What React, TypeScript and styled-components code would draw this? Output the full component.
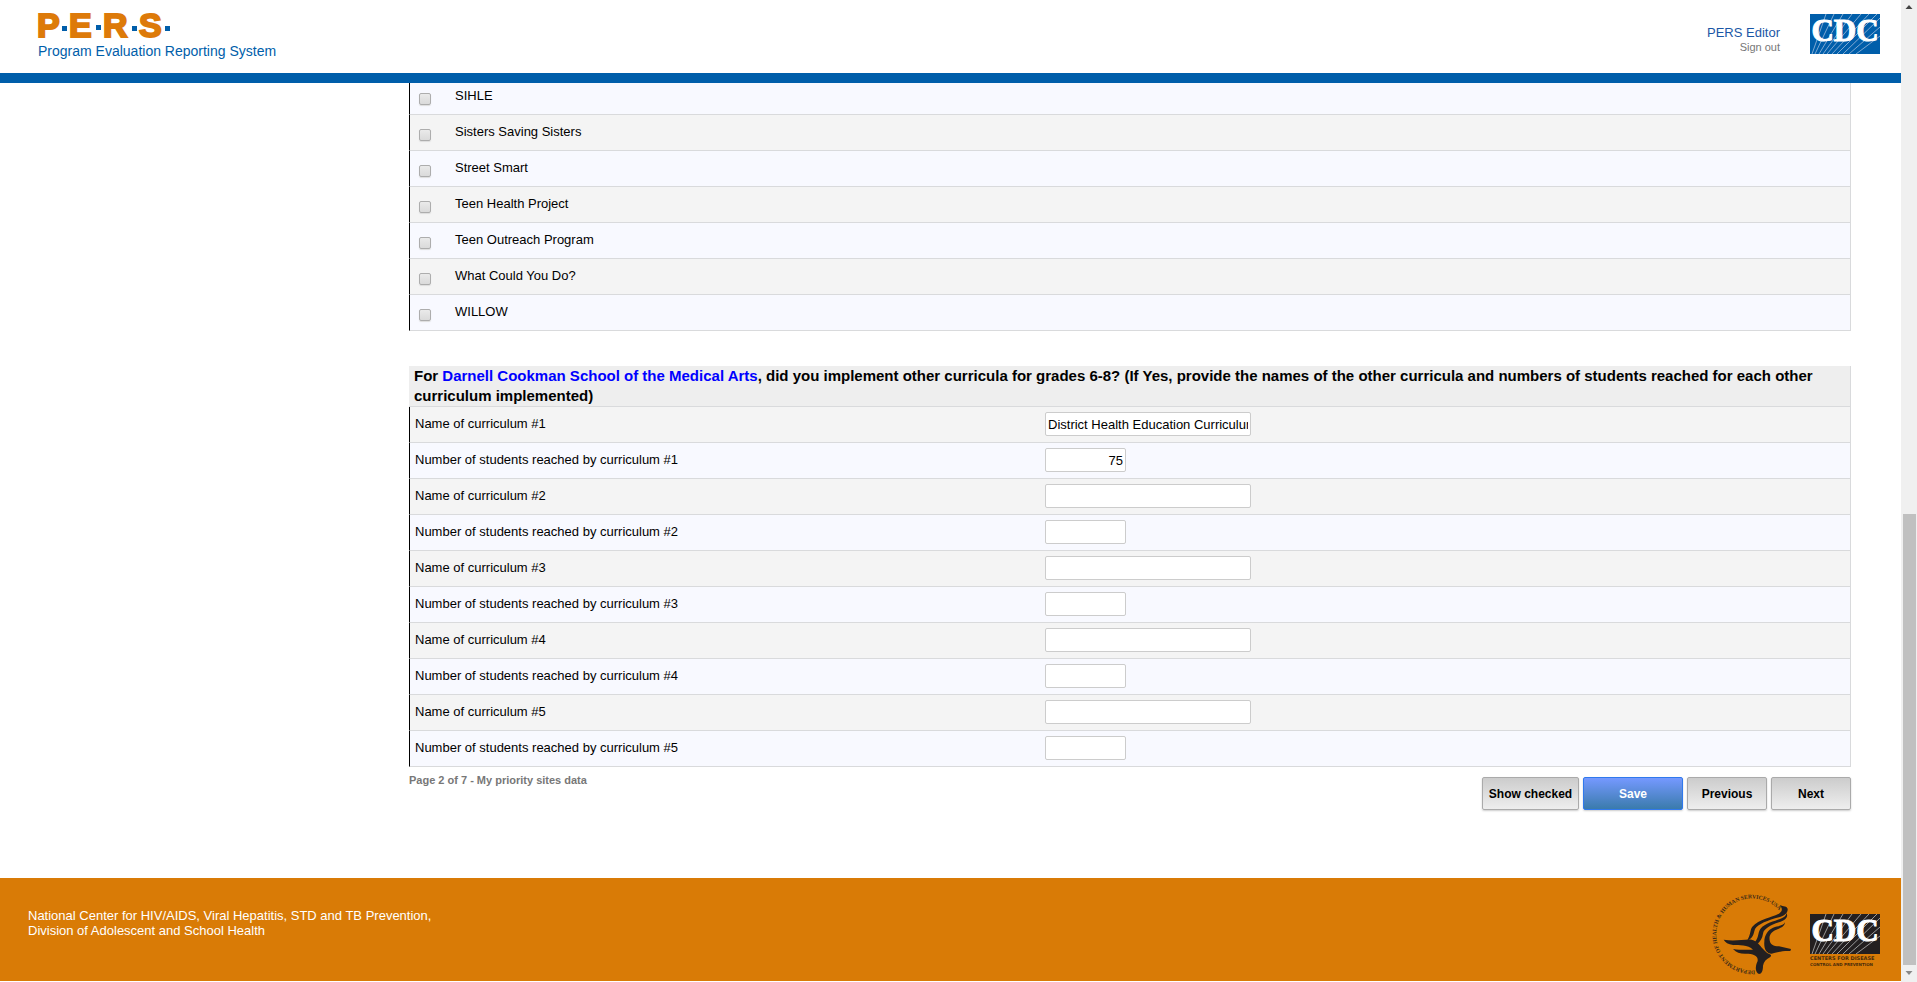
import React from "react";
import styled, { createGlobalStyle } from "styled-components";

const GlobalStyle = createGlobalStyle`
  * { box-sizing: border-box; }
  body {
    margin: 0;
    background: #fff;
    color: #000;
    font: 13px/16px "Liberation Sans", Arial, sans-serif;
  }
  ::-webkit-scrollbar { display: none; }
`;

const Shell = styled.div`
  display: flex;
  min-height: 100vh;
`;

const Page = styled.div`
  flex: 1;
  min-width: 0;
  display: flex;
  flex-direction: column;
`;

const Header = styled.header`
  display: flex;
  justify-content: space-between;
  align-items: flex-start;
  height: 83px;
  padding: 0 21px 0 38px;
  border-bottom: 10px solid #005eaa;
`;

const Brand = styled.a`
  display: block;
  padding-top: 11px;
  text-decoration: none;
`;

const BrandName = styled.svg`
  display: block;
  overflow: visible;
`;

const Tagline = styled.span`
  display: block;
  margin-top: 4px;
  color: #005eaa;
  font-size: 14px;
  line-height: 16px;
`;

const Account = styled.div`
  display: flex;
  gap: 30px;
  padding-top: 14px;
`;

const AccountLinks = styled.div`
  display: flex;
  flex-direction: column;
  align-items: flex-end;
  padding-top: 11px;
`;

const AccountLink = styled.a<{ $small?: boolean }>`
  color: ${(p) => (p.$small ? "#777" : "#1b57a6")};
  font-size: ${(p) => (p.$small ? 11 : 13)}px;
  line-height: ${(p) => (p.$small ? 12 : 16)}px;
  text-decoration: none;
`;

const Main = styled.main`
  flex: 1;
  padding: 0 50px 67px 409px;
`;

const Table = styled.table`
  width: 100%;
  border-collapse: separate;
  border-spacing: 0;
  border-right: 1px solid #d9dadc;
  table-layout: fixed;
`;

const CurriculaTable = styled(Table)`
  margin-top: 35px;
`;

const Caption = styled.th`
  padding: 0 5px;
  background: #eee;
  border-bottom: 1px solid #d9dadc;
  text-align: left;
  font-size: 15px;
  line-height: 20px;
`;

const School = styled.span`
  color: #00f;
`;

const Row = styled.tr<{ $alt?: boolean; $clipped?: boolean }>`
  height: ${(p) => (p.$clipped ? 32 : 36)}px;
  background: ${(p) => (p.$alt ? "#f4f4f4" : "#f8f9ff")};
`;

const Cell = styled.td<{ $first?: boolean }>`
  padding: 0 0 10px ${(p) => (p.$first ? 5 : 0)}px;
  border-bottom: 1px solid #d9dadc;
  border-left: ${(p) => (p.$first ? "1px solid #000" : "0")};
  vertical-align: bottom;
`;

const CheckCell = styled(Cell)`
  width: 46px;
  padding: 0 0 9px 9px;
`;

const FieldCell = styled(Cell)`
  padding: 5px 0;
  vertical-align: top;
`;

const Check = styled.input`
  appearance: none;
  display: block;
  width: 12px;
  height: 12px;
  margin: 0;
  border: 1px solid #adadad;
  border-radius: 2px;
  background: linear-gradient(#eaeaea, #dadada);
  box-shadow: 0 1px 1px #ddd;
`;

const Field = styled.input<{ $number?: boolean }>`
  display: block;
  width: ${(p) => (p.$number ? 81 : 206)}px;
  height: 24px;
  padding: 1px 2px;
  border: 1px solid #ccc;
  border-radius: 2px;
  background: #fff;
  color: #000;
  font: inherit;
  text-align: ${(p) => (p.$number ? "right" : "left")};
`;

const FormFooter = styled.div`
  display: flex;
  justify-content: space-between;
  align-items: flex-start;
  padding-top: 7px;
`;

const PageNote = styled.p`
  margin: 0;
  color: #777;
  font-size: 11px;
  font-weight: bold;
  line-height: 12px;
`;

const Actions = styled.div`
  display: flex;
  gap: 4px;
  padding-top: 3px;
`;

const Button = styled.button<{ $primary?: boolean; $width: number }>`
  width: ${(p) => p.$width}px;
  height: 33px;
  padding: 0;
  border: 1px solid ${(p) => (p.$primary ? "#3079ed" : "#aaa")};
  border-radius: 2px;
  background: ${(p) => (p.$primary ? "linear-gradient(#7599ff, #3a7bac)" : "linear-gradient(#ccc, #eee)")};
  box-shadow: 0 1px 2px #ccc;
  color: ${(p) => (p.$primary ? "#fff" : "#000")};
  font: bold 12px/16px "Liberation Sans", Arial, sans-serif;
  white-space: nowrap;
`;

const Footer = styled.footer`
  display: flex;
  justify-content: space-between;
  height: 103px;
  margin-bottom: 1px;
  padding: 0 21px 0 28px;
  background: #d97b06;
`;

const Address = styled.p`
  margin: 0;
  padding-top: 30px;
  color: #fff;
  font-size: 13px;
  line-height: 15px;
`;

const FooterLogos = styled.div`
  display: flex;
  align-items: flex-start;
  gap: 14px;
  padding-top: 15px;
`;

const Seal = styled.svg`
  display: block;
  overflow: visible;
`;

const CdcBlock = styled.div`
  padding-top: 21px;
`;

const ScrollTrack = styled.div`
  position: sticky;
  top: 0;
  display: flex;
  flex-direction: column;
  align-items: center;
  width: 16px;
  height: 100vh;
  background: #f0f0f0;
`;

const ScrollSpace = styled.div`
  flex: 497;
`;

const ScrollThumb = styled.div`
  flex: 451;
  width: 13px;
  background: #c0c0c0;
`;

function Arrow({ down }: { down?: boolean }) {
  return (
    <svg width="16" height="17" viewBox="0 0 16 17" aria-hidden="true">
      {down ? <path d="M4.5 6h7L8 10z" fill="#888" /> : <path d="M4.5 9h7L8 5z" fill="#444" />}
    </svg>
  );
}

function PersLogo() {
  return (
    <BrandName width="140" height="28" viewBox="0 0 140 28" role="img" aria-label="P.E.R.S.">
      <g fill="#dd7a09" stroke="#dd7a09" strokeWidth="2" fontFamily="Liberation Sans, Arial, sans-serif" fontWeight="bold" fontSize="34">
        <text x="-1" y="26">P</text>
        <text x="31" y="26">E</text>
        <text x="65" y="26">R</text>
        <text x="101" y="26">S</text>
      </g>
      <path d="M24 15h5v5h-5zM58 14h5v5h-5zM94 15h5v5h-5zM127 15h5v5h-5z" fill="#005eaa" />
    </BrandName>
  );
}

function CdcLogo({ fill, ray, named }: { fill: string; ray: string; named?: boolean }) {
  return (
    <svg width="70" height={named ? 54 : 40} viewBox={named ? "0 0 70 54" : "0 0 70 40"} role="img" aria-label="CDC">
      <path d="M0 0h70v40H0z" fill={fill} />
      <path
        d="M2 40L16 0M5 40L24 0M9 40L33 0M13 40L42 0M17 40L51 0M22 40L59 0M27 40L67 0M33 40L70 4M39 40L70 13M46 40L70 22"
        stroke={ray}
        strokeWidth="1"
      />
      <text x="35" y="27" textAnchor="middle" fill="#fff" stroke="#fff" strokeWidth="1" fontFamily="Liberation Serif, serif" fontWeight="bold" fontSize="31">
        CDC
      </text>
      {named && (
        <g fill="#4a2c0a" fontFamily="DejaVu Sans, sans-serif" fontWeight="bold">
          <text x="0" y="46" fontSize="5">CENTERS FOR DISEASE</text>
          <text x="0" y="52" fontSize="4">CONTROL AND PREVENTION</text>
        </g>
      )}
    </svg>
  );
}

function HhsSeal() {
  return (
    <Seal width="84" height="84" viewBox="21 24 252 252" role="img" aria-label="Department of Health and Human Services USA">
      <path id="seal" d="M150 256A108 108 0 1 1 229 85" fill="none" />
      <text fill="#3a2a18" fontFamily="Liberation Serif, serif" fontWeight="bold" fontSize="17">
        <textPath href="#seal">DEPARTMENT OF HEALTH &amp; HUMAN SERVICES·USA</textPath>
      </text>
      <g fill="#231f20">
        <path d="M224 60C236 66 246 62 248 72C249 84 238 92 222 97C190 105 158 118 150 132C146 144 146 152 138 160L126 168C140 140 134 136 142 125C160 104 204 96 218 88C230 82 236 74 224 60Z" />
        <path d="M244 84C252 96 240 106 222 112C196 120 176 132 174 146C172 160 166 168 158 176L150 170C162 158 158 144 166 132C182 112 214 108 230 100C238 96 244 92 244 84Z" />
        <path d="M240 112C240 124 226 130 214 134C196 142 192 152 194 166C196 178 204 184 222 184L258 192L256 198C232 196 210 204 200 206C184 206 176 190 178 170C178 150 190 134 204 128C222 122 236 122 240 112Z" />
        <path d="M56 164C90 170 118 162 140 164C160 170 166 184 180 198C190 210 204 206 196 216C184 222 176 230 174 242C174 258 170 266 162 267C150 262 150 244 158 228C160 214 150 208 130 206C108 208 96 204 84 192C110 196 128 194 144 194C130 178 100 182 84 180C70 178 60 172 56 164Z" />
      </g>
    </Seal>
  );
}

const curricula = ["SIHLE", "Sisters Saving Sisters", "Street Smart", "Teen Health Project", "Teen Outreach Program", "What Could You Do?", "WILLOW"];

const others = [
  { name: "District Health Education Curriculum", reached: "75" },
  { name: "", reached: "" },
  { name: "", reached: "" },
  { name: "", reached: "" },
  { name: "", reached: "" },
];

export default function App() {
  return (
    <Shell>
      <GlobalStyle />
      <Page>
        <Header>
          <Brand href="#">
            <PersLogo />
            <Tagline>Program Evaluation Reporting System</Tagline>
          </Brand>
          <Account>
            <AccountLinks>
              <AccountLink href="#">PERS Editor</AccountLink>
              <AccountLink href="#" $small>Sign out</AccountLink>
            </AccountLinks>
            <CdcLogo fill="#005eaa" ray="#7fa9d3" />
          </Account>
        </Header>
        <Main>
          <Table>
            <tbody>
              {curricula.map((name, i) => (
                <Row key={name} $alt={i % 2 === 1} $clipped={i === 0}>
                  <CheckCell $first>
                    <Check type="checkbox" id={`curriculum-${i}`} />
                  </CheckCell>
                  <Cell><label htmlFor={`curriculum-${i}`}>{name}</label></Cell>
                </Row>
              ))}
            </tbody>
          </Table>
          <CurriculaTable>
            <colgroup>
              <col width="636" />
              <col />
            </colgroup>
            <thead>
              <tr>
                <Caption colSpan={2}>
                  For <School>Darnell Cookman School of the Medical Arts</School>, did you implement other curricula for grades 6-8? (If Yes, provide the names of the other curricula and numbers of students reached for each other curriculum implemented)
                </Caption>
              </tr>
            </thead>
            <tbody>
              {others.map((item, i) => (
                <React.Fragment key={i}>
                  <Row $alt>
                    <Cell $first><label htmlFor={`name-${i}`}>Name of curriculum #{i + 1}</label></Cell>
                    <FieldCell><Field id={`name-${i}`} defaultValue={item.name} /></FieldCell>
                  </Row>
                  <Row>
                    <Cell $first><label htmlFor={`reached-${i}`}>Number of students reached by curriculum #{i + 1}</label></Cell>
                    <FieldCell><Field $number id={`reached-${i}`} defaultValue={item.reached} /></FieldCell>
                  </Row>
                </React.Fragment>
              ))}
            </tbody>
          </CurriculaTable>
          <FormFooter>
            <PageNote>Page 2 of 7 - My priority sites data</PageNote>
            <Actions>
              <Button $width={97}>Show checked</Button>
              <Button $width={100} $primary>Save</Button>
              <Button $width={80}>Previous</Button>
              <Button $width={80}>Next</Button>
            </Actions>
          </FormFooter>
        </Main>
        <Footer>
          <Address>
            National Center for HIV/AIDS, Viral Hepatitis, STD and TB Prevention,
            <br />
            Division of Adolescent and School Health
          </Address>
          <FooterLogos>
            <HhsSeal />
            <CdcBlock><CdcLogo fill="#231f20" ray="#999" named /></CdcBlock>
          </FooterLogos>
        </Footer>
      </Page>
      <ScrollTrack>
        <Arrow />
        <ScrollSpace />
        <ScrollThumb />
        <Arrow down />
      </ScrollTrack>
    </Shell>
  );
}
